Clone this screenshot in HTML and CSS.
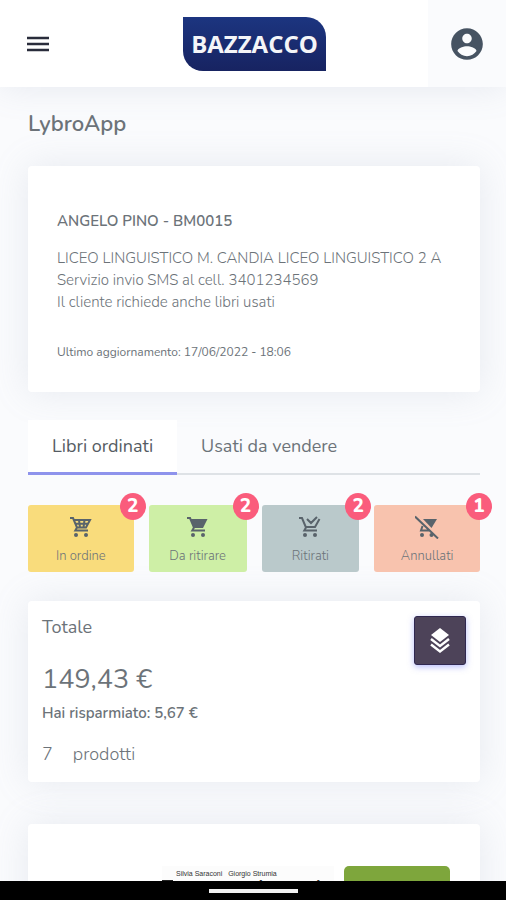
FILE: index.html
```html
<!DOCTYPE html>
<html lang="it">
<head>
<meta charset="utf-8">
<meta name="viewport" content="width=device-width, initial-scale=1">
<title>LybroApp</title>
<link rel="stylesheet" href="styles.css">
</head>
<body>
<header class="topbar">
  <button class="menu-button" type="button" aria-label="Menu">
    <svg width="22" height="16" viewBox="0 0 22 16"><path d="M0 2h22M0 8h22M0 14h22" stroke="#292c3b" stroke-width="2.4"/></svg>
  </button>
  <a class="logo" href="#">BAZZACCO</a>
  <button class="account-button" type="button" aria-label="Account">
    <svg width="38" height="38" viewBox="0 0 24 24"><path fill="#465362" d="M12 2C6.48 2 2 6.480 2 12s4.480 10 10 10 10-4.480 10-10S17.520 2 12 2zm0 3.500c1.660 0 3 1.340 3 3s-1.340 3-3 3-3-1.340-3-3 1.340-3 3-3zm0 14.200c-2.500 0-4.710-1.280-6-3.220.03-1.990 4-3.080 6-3.080s5.970 1.090 6 3.080c-1.290 1.940-3.500 3.220-6 3.220z"/></svg>
  </button>
</header>
<main class="content">
  <h1 class="page-title">LybroApp</h1>
  <section class="card customer">
    <h2 class="customer-name">ANGELO PINO - BM0015</h2>
    <p class="customer-info">LICEO LINGUISTICO M. CANDIA LICEO LINGUISTICO 2 A<br>Servizio invio SMS al cell. 3401234569<br>Il cliente richiede anche libri usati</p>
    <p class="customer-updated">Ultimo aggiornamento: 17/06/2022 - 18:06</p>
  </section>
  <nav class="tabs">
    <a class="tab tab-active" href="#">Libri ordinati</a>
    <a class="tab" href="#">Usati da vendere</a>
  </nav>
  <div class="filters">
    <button class="filter filter-ordered" type="button">
      <svg class="filter-icon" viewBox="0 0 24 24"><path d="M1 3h3l4 9.500-1.700 3H19M4.500 5H21l-4 7.500H8M6 8.700h13M10 5l1 7.500M15.500 5l-1 7.500"/><circle cx="7" cy="20" r="2"/><circle cx="17" cy="20" r="2"/></svg>
      In ordine<span class="badge">2</span>
    </button>
    <button class="filter filter-ready" type="button">
      <svg class="filter-icon" viewBox="0 0 24 24"><path d="M1 3h3l4 9.500-1.700 3H19"/><path class="solid" d="M4.500 4H21.500l-4.500 9H8z"/><circle cx="7" cy="20" r="2"/><circle cx="17" cy="20" r="2"/></svg>
      Da ritirare<span class="badge">2</span>
    </button>
    <button class="filter filter-collected" type="button">
      <svg class="filter-icon" viewBox="0 0 24 24"><path d="M1 3h3l4 9.500-1.700 3H19M8 12h9l4.500-8M9 4l4 4 6-6"/><circle cx="7" cy="20" r="2"/><circle cx="17" cy="20" r="2"/></svg>
      Ritirati<span class="badge">2</span>
    </button>
    <button class="filter filter-cancelled" type="button">
      <svg class="filter-icon" viewBox="0 0 24 24"><path d="M0 1.500l23 22M7.500 11l-1.500 4.500h8"/><path class="solid" d="M8 4H22l-5.500 9z"/><circle cx="7" cy="20" r="2"/><circle cx="16.500" cy="20" r="2"/></svg>
      Annullati<span class="badge">1</span>
    </button>
  </div>
  <section class="card total">
    <div class="total-text">
      <h2 class="total-title">Totale</h2>
      <p class="total-amount">149,43 €</p>
      <p class="total-saved">Hai risparmiato: 5,67 €</p>
      <p class="total-count"><span>7</span><span>prodotti</span></p>
    </div>
    <button class="layers-button" type="button" aria-label="Dettagli">
      <svg width="20" height="28" viewBox="0 0 20 28"><path fill="#fff" d="M10 1l9 7-9 7-9-7z"/><path fill="none" stroke="#fff" stroke-width="2.400" d="M1 12l9 7 9-7M1 17.500l9 7 9-7"/></svg>
    </button>
  </section>
  <section class="card product">
    <div class="cover">
      <p class="cover-authors">Silvia Saraconi &nbsp; Giorgio Strumia</p>
      <p class="cover-title"><span class="cover-mark"></span>Conoscere la materia</p>
    </div>
    <div class="status"></div>
  </section>
</main>
<footer class="system-bar"><span class="home-handle"></span></footer>
</body>
</html>
```
FILE: styles.css
```css
* { box-sizing: border-box; }
body {
  margin: 0;
  height: 100vh;
  display: flex;
  flex-direction: column;
  overflow: hidden;
  background: #fafbfd;
  color: #6c7379;
  font-family: Nunito, Lato, "Open Sans", sans-serif;
}
h1, h2, p { margin: 0; }
button { border: 0; padding: 0; font: inherit; color: inherit; cursor: pointer; }
a { color: inherit; text-decoration: none; }
svg { display: block; }
.topbar {
  flex: none;
  display: grid;
  grid-template-columns: 75px 1fr 78px;
  align-items: stretch;
  justify-items: center;
  height: 87px;
  background: #fff;
  box-shadow: 0 0 34px rgba(130, 145, 170, 0.17);
}
.menu-button { background: none; }
.logo {
  align-self: center;
  margin-left: 6px;
  padding: 0 8px;
  border-radius: 0 20px 0 20px;
  background: linear-gradient(#1c3580, #172361);
  color: #f4f5f8;
  font: 700 24px/54px "Open Sans", sans-serif;
}
.account-button {
  width: 100%;
  display: flex;
  align-items: center;
  justify-content: center;
  background: #fafbfd;
}
.content { flex: 1; min-height: 0; overflow: hidden; padding: 0 26px 0 28px; }
.page-title { margin: 22px 0 27px; font-size: 22px; line-height: 30px; font-weight: 600; }
.card { background: #fff; border-radius: 4px; box-shadow: 0 0 36px rgba(145, 155, 180, 0.18); }
.customer { padding: 44px 30px 30px 29px; }
.customer-name { font-size: 15px; line-height: 22px; font-weight: 600; }
.customer-info { margin-top: 15px; font-size: 15px; line-height: 22px; font-weight: 300; }
.customer-updated { margin-top: 29px; font-size: 12px; line-height: 20px; }
.tabs { display: flex; margin-top: 28px; border-bottom: 2px solid #dee2e6; }
.tab { padding: 0 24px; margin-bottom: -2px; border-bottom: 3px solid transparent; font-size: 18px; line-height: 52px; }
.tab-active { background: #fff; border-color: #8e93ec; color: #555c63; }
.filters { display: grid; grid-template-columns: 106fr 98fr 98fr 106fr; gap: 15px; margin: 30px 0 29px; }
.filter {
  position: relative;
  display: flex;
  flex-direction: column;
  align-items: center;
  padding: 10px 0 6px;
  border-radius: 3px;
  font-size: 13px;
  font-weight: 300;
  line-height: 20px;
}
.filter-ordered { background: #f9dc7c; }
.filter-ready { background: #ceefa6; }
.filter-collected { background: #bac9cb; }
.filter-cancelled { background: #f8c3ae; }
.filter-icon { width: 24px; height: 24px; margin-bottom: 7px; fill: none; stroke: #59636b; stroke-width: 2; }
.filter-icon circle, .filter-icon .solid { fill: #59636b; stroke: none; }
.badge {
  position: absolute;
  top: -12px;
  right: -12px;
  width: 26px;
  border-radius: 50%;
  background: #fa5c7c;
  color: #fff;
  font-size: 19px;
  line-height: 27px;
  font-weight: 800;
  text-align: center;
}
.total { display: flex; justify-content: space-between; align-items: flex-start; padding: 15px 14px 16px; }
.total-title { font-size: 18px; line-height: 22px; font-weight: 400; }
.total-amount { margin-top: 24px; font-size: 27px; line-height: 36px; }
.total-saved { margin-top: 4px; font-size: 15px; line-height: 22px; font-weight: 600; }
.total-count { display: flex; gap: 20px; margin-top: 18px; font-size: 18px; line-height: 24px; font-weight: 300; }
.layers-button {
  width: 52px;
  height: 49px;
  display: flex;
  align-items: center;
  justify-content: center;
  border: 1px solid #302850;
  border-radius: 3px;
  background: #4d4359;
  box-shadow: 0 2px 6px rgba(114, 124, 245, 0.5);
}
.product { display: flex; justify-content: space-between; margin-top: 42px; padding: 42px 30px; }
.cover { margin-left: 104px; padding-top: 2px; width: 172px; background: #fcfcfc; color: #333; }
.cover-authors { padding-left: 14px; font: 7px/12px "Liberation Sans", sans-serif; white-space: nowrap; }
.cover-title { display: flex; align-items: flex-start; gap: 4px; font: 700 15px/12px "Liberation Sans", sans-serif; white-space: nowrap; }
.cover-mark { flex: none; width: 11px; height: 11px; background: #222; }
.status { width: 106px; height: 100px; border-radius: 5px; background: #7ea63c; }
.system-bar { flex: none; display: flex; justify-content: center; align-items: center; height: 19px; background: #000; }
.home-handle { width: 89px; height: 4px; background: #f2f2f2; }
```
